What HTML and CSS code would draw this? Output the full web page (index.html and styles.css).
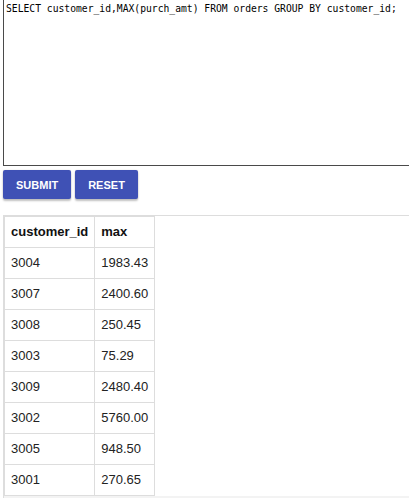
FILE: index.html
```html
<!DOCTYPE html>
<html>
<head>
<meta charset="utf-8">
<link rel="stylesheet" href="styles.css">
</head>
<body>
<textarea class="editor" spellcheck="false">SELECT customer_id,MAX(purch_amt) FROM orders GROUP BY customer_id;</textarea>
<div class="actions">
  <button class="btn">SUBMIT</button>
  <button class="btn">RESET</button>
</div>
<div class="results">
  <table class="grid">
    <thead>
      <tr><th>customer_id</th><th>max</th></tr>
    </thead>
    <tbody>
      <tr><td>3004</td><td>1983.43</td></tr>
      <tr><td>3007</td><td>2400.60</td></tr>
      <tr><td>3008</td><td>250.45</td></tr>
      <tr><td>3003</td><td>75.29</td></tr>
      <tr><td>3009</td><td>2480.40</td></tr>
      <tr><td>3002</td><td>5760.00</td></tr>
      <tr><td>3005</td><td>948.50</td></tr>
      <tr><td>3001</td><td>270.65</td></tr>
    </tbody>
  </table>
  <div class="strip"></div>
</div>
</body>
</html>
```
FILE: styles.css
```css
html, body {
  margin: 0;
  height: 498px;
  overflow: hidden;
  background: #fff;
}
body {
  padding-left: 3px;
  font-family: "Liberation Sans", Arial, sans-serif;
}
.editor {
  display: block;
  box-sizing: border-box;
  width: 100%;
  height: 166px;
  margin: 0;
  padding: 2px 2px;
  border: 1px solid #4a4a4a;
  border-top: 0;
  border-right: 0;
  font-family: "DejaVu Sans Mono", "Liberation Mono", monospace;
  font-size: 9.7px;
  line-height: 13px;
  color: #000;
  resize: none;
  outline: none;
  overflow: hidden;
  background: #fff;
}
.actions {
  display: flex;
  gap: 4px;
  margin-top: 4px;
}
.btn {
  height: 29px;
  padding: 0 13px;
  border: none;
  border-radius: 2px;
  background: #3f51b5;
  color: #fff;
  font-family: "Liberation Sans", Arial, sans-serif;
  font-weight: bold;
  font-size: 11px;
  box-shadow: 0 2px 2px rgba(0,0,0,0.24), 0 0 2px rgba(0,0,0,0.12);
  cursor: pointer;
}
.results {
  margin-top: 16px;
  border-top: 1px solid #ddd;
  border-left: 1px solid #ddd;
}
.grid {
  border-collapse: collapse;
  border: 1px solid #ddd;
  font-size: 13px;
  line-height: 16px;
  color: #222;
}
.grid th, .grid td {
  border: 1px solid #ddd;
  padding: 7px 6px;
  text-align: left;
  white-space: nowrap;
}
.grid th {
  font-weight: bold;
  color: #111;
}
.strip {
  height: 10px;
  background: #f3f3f3;
}
```
